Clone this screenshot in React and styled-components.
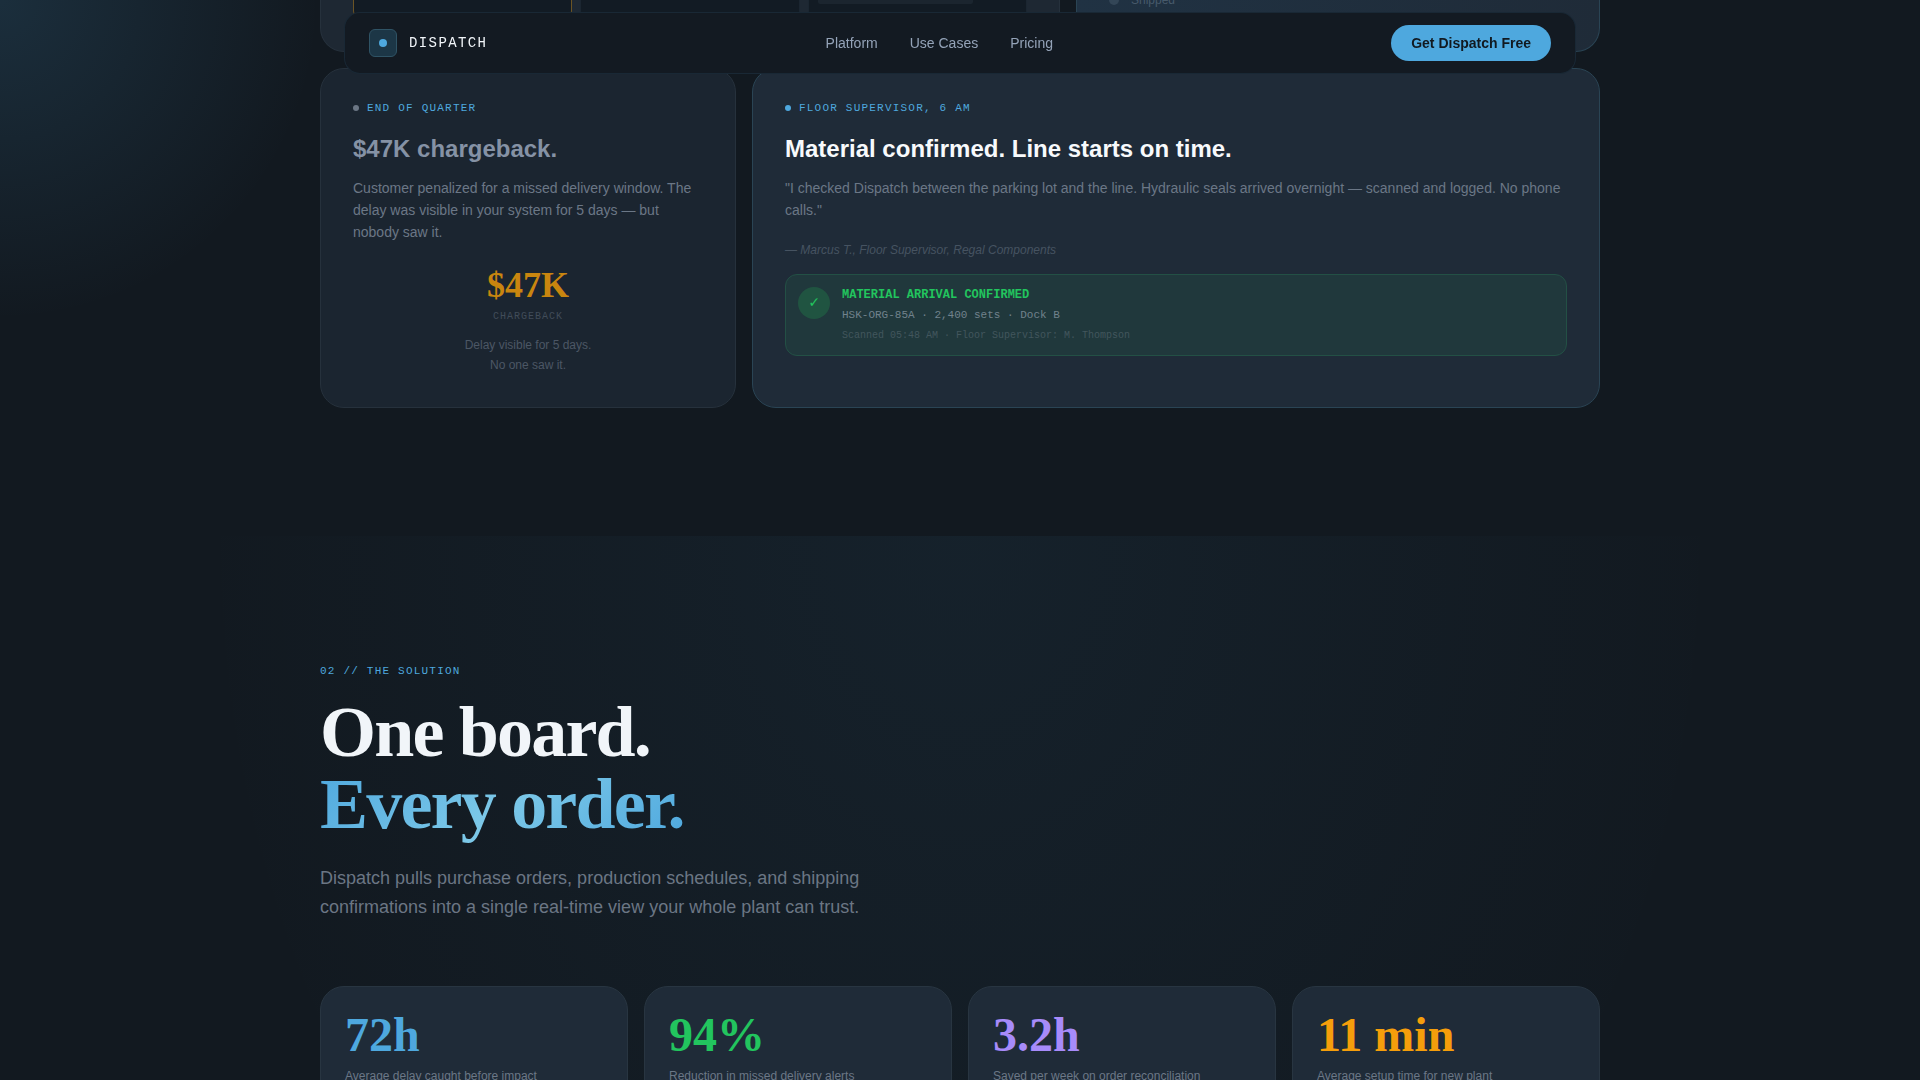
import React from "react";
import styled, { createGlobalStyle } from "styled-components";

const sans = `"Liberation Sans", Arial, sans-serif`;
const serif = `"Liberation Serif", "Times New Roman", serif`;
const mono = `"Liberation Mono", "Courier New", monospace`;

const GlobalStyle = createGlobalStyle`
  *, *::before, *::after { box-sizing: border-box; }
  html { background: #121920; }
  body {
    margin: 0;
    font-family: ${sans};
    color: #f1f5f9;
    background: radial-gradient(circle 320px at 0 0, rgba(78, 168, 222, 0.15), transparent) no-repeat fixed #121920;
  }
  h2, h3, p { margin: 0; }
`;

const Header = styled.header`
  position: fixed;
  z-index: 10;
  top: 12px;
  left: 0;
  right: 0;
  max-width: 1280px;
  margin: 0 auto;
  padding: 0 24px;
`;

const NavBar = styled.nav`
  display: flex;
  align-items: center;
  justify-content: space-between;
  padding: 12px 24px;
  border: 1px solid rgba(78, 168, 222, 0.1);
  border-radius: 16px;
  background: #131a22;
`;

const Brand = styled.a`
  display: flex;
  align-items: center;
  gap: 12px;
  color: #f1f5f9;
  font: 14px/16px ${mono};
  letter-spacing: 0.1em;
  text-decoration: none;
`;

const BrandMark = styled.span`
  display: grid;
  place-items: center;
  width: 28px;
  height: 28px;
  border: 1px solid #2f5365;
  border-radius: 6px;
  background: #1c3646;

  &::after {
    content: "";
    width: 8px;
    height: 8px;
    border-radius: 50%;
    background: #4ea8de;
  }
`;

const NavLinks = styled.div`
  display: flex;
  gap: 32px;
`;

const NavLink = styled.a`
  color: #94a3b8;
  font-size: 14px;
  line-height: 16px;
  text-decoration: none;
`;

const CtaButton = styled.button`
  padding: 10px 20px;
  border: 0;
  border-radius: 18px;
  background: #4ea8de;
  color: #111920;
  font: 600 14px/16px ${sans};
  cursor: pointer;
`;

const Container = styled.div`
  max-width: 1280px;
  margin: 0 auto;
`;

const StorySection = styled.section`
  padding-bottom: 128px;
`;

const StoryGrid = styled(Container)`
  display: grid;
  grid-template-columns: repeat(12, 1fr);
  gap: 16px;
`;

const Card = styled.article`
  grid-column: span ${(p) => p.$span};
  padding: 32px;
  border: 1px solid ${(p) => (p.$active ? "#2a4454" : "#26313c")};
  border-radius: 24px;
  background: ${(p) => (p.$active ? "#1f2b38" : "#1b2530")};
`;

const TailCard = styled(Card)`
  padding-top: 0;
  border-top: 0;
  border-radius: 0 0 24px 24px;
  background: ${(p) => (p.$active ? "linear-gradient(90deg, #203243, #1f2b38)" : "#1e2833")};
`;

const Columns = styled.div`
  display: grid;
  grid-template-columns: repeat(3, 1fr);
  gap: 8px;
`;

const Column = styled.div`
  height: 19px;
  padding: 0 9px;
  border: 1px solid ${(p) => (p.$alert ? "#6b5424" : "#1b2631")};
  border-top: 0;
  border-radius: 0 0 8px 8px;
  background: #121b24;
`;

const ColumnBar = styled.div`
  width: 155px;
  height: 4px;
  border-radius: 0 0 2px 2px;
  background: #1b252f;
`;

const StatusRow = styled.div`
  display: flex;
  align-items: flex-end;
  height: 9px;
  overflow: hidden;
`;

const Status = styled.span`
  display: flex;
  align-items: center;
  gap: 12px;
  color: #475a6b;
  font-size: 12px;
  line-height: 18px;

  &::before {
    content: "";
    width: 10px;
    height: 10px;
    border-radius: 50%;
    background: #334657;
  }
`;

const Eyebrow = styled.p`
  display: flex;
  align-items: center;
  gap: 8px;
  margin-bottom: 18px;
  color: #4ea8de;
  font: 11px/14px ${mono};
  letter-spacing: 0.11em;
  text-transform: uppercase;
`;

const Dot = styled.span`
  width: 6px;
  height: 6px;
  border-radius: 50%;
  background: ${(p) => (p.$active ? "#4ea8de" : "#6b7684")};
`;

const CardTitle = styled.h3`
  margin-bottom: 12px;
  color: ${(p) => (p.$active ? "#f8fafc" : "#8592a5")};
  font-size: 24px;
  font-weight: 700;
  line-height: 32px;
`;

const CardText = styled.p`
  color: #6b7786;
  font-size: 14px;
  line-height: 22px;
`;

const Loss = styled.div`
  margin-top: 24px;
  text-align: center;
`;

const LossValue = styled.p`
  margin-bottom: 5px;
  color: #c9860f;
  font: 700 36px/36px ${serif};
`;

const LossCaption = styled.p`
  margin-bottom: 9px;
  color: #414c59;
  font: 10px/18px ${mono};
  letter-spacing: 0.1em;
`;

const LossNote = styled.p`
  color: #4c5765;
  font-size: 12px;
  line-height: 20px;
`;

const Attribution = styled.p`
  margin: 20px 0 15px;
  color: #465361;
  font-size: 12px;
  font-style: italic;
  line-height: 18px;
`;

const Notice = styled.div`
  display: flex;
  gap: 12px;
  padding: 12px;
  border: 1px solid #235045;
  border-radius: 12px;
  background: #20383c;
  font-family: ${mono};
`;

const NoticeIcon = styled.span`
  display: grid;
  place-items: center;
  width: 32px;
  height: 32px;
  border-radius: 50%;
  background: #205441;
  color: #22c55e;
  font-size: 16px;
  line-height: 18px;
`;

const NoticeTitle = styled.p`
  margin-bottom: 3px;
  color: #22c55e;
  font-size: 12px;
  font-weight: 700;
  line-height: 16px;
`;

const NoticeText = styled.p`
  margin-bottom: 5px;
  color: #71828c;
  font-size: 11px;
  line-height: 18px;
`;

const NoticeMeta = styled.p`
  color: #42565c;
  font-size: 10px;
  line-height: 14px;
`;

const SolutionSection = styled.section`
  padding: 128px 0;
  background: radial-gradient(ellipse 40% 1000px at 50% 0, rgba(78, 168, 222, 0.06), transparent);
`;

const Headline = styled.h2`
  color: #f1f5f9;
  font: 700 72px/72px ${serif};
  letter-spacing: -0.025em;
`;

const Accent = styled.span`
  background: linear-gradient(135deg, #4ea8de 0%, #7cc8e8 50%, #4ea8de 100%);
  background-clip: text;
  -webkit-background-clip: text;
  color: transparent;
`;

const Lead = styled.p`
  max-width: 560px;
  margin: 24px 0 64px;
  color: #6b7684;
  font-size: 18px;
  line-height: 29px;
`;

const StatGrid = styled.div`
  display: grid;
  grid-template-columns: repeat(4, 1fr);
  gap: 16px;
`;

const StatCard = styled.div`
  padding: 24px;
  border: 1px solid #283541;
  border-radius: 24px;
  background: #1f2b38;
`;

const StatValue = styled.p`
  margin-bottom: 8px;
  color: ${(p) => p.$color};
  font: 700 48px/48px ${serif};
`;

const StatLabel = styled.p`
  color: #6b7786;
  font-size: 12px;
  line-height: 18px;
`;

const links = ["Platform", "Use Cases", "Pricing"];

const stats = [
  { value: "72h", label: "Average delay caught before impact", color: "#4ea8de" },
  { value: "94%", label: "Reduction in missed delivery alerts", color: "#22c55e" },
  { value: "3.2h", label: "Saved per week on order reconciliation", color: "#a78bfa" },
  { value: "11 min", label: "Average setup time for new plant", color: "#f59e0b" },
];

export default function App() {
  return (
    <>
      <GlobalStyle />
      <Header>
        <NavBar>
          <Brand href="#">
            <BrandMark />
            DISPATCH
          </Brand>
          <NavLinks>
            {links.map((label) => (
              <NavLink href="#" key={label}>{label}</NavLink>
            ))}
          </NavLinks>
          <CtaButton type="button">Get Dispatch Free</CtaButton>
        </NavBar>
      </Header>
      <main>
        <StorySection>
          <StoryGrid>
            <TailCard $span={7}>
              <Columns>
                <Column $alert />
                <Column />
                <Column>
                  <ColumnBar />
                </Column>
              </Columns>
            </TailCard>
            <TailCard $span={5} $active>
              <StatusRow>
                <Status>Shipped</Status>
              </StatusRow>
            </TailCard>
            <Card $span={4}>
              <Eyebrow><Dot />End of quarter</Eyebrow>
              <CardTitle>$47K chargeback.</CardTitle>
              <CardText>
                Customer penalized for a missed delivery window. The delay was visible in your
                system for 5 days — but nobody saw it.
              </CardText>
              <Loss>
                <LossValue>$47K</LossValue>
                <LossCaption>CHARGEBACK</LossCaption>
                <LossNote>
                  Delay visible for 5 days.
                  <br />
                  No one saw it.
                </LossNote>
              </Loss>
            </Card>
            <Card $span={8} $active>
              <Eyebrow><Dot $active />Floor supervisor, 6 AM</Eyebrow>
              <CardTitle $active>Material confirmed. Line starts on time.</CardTitle>
              <CardText>
                "I checked Dispatch between the parking lot and the line. Hydraulic seals arrived
                overnight — scanned and logged. No phone calls."
              </CardText>
              <Attribution>— Marcus T., Floor Supervisor, Regal Components</Attribution>
              <Notice>
                <NoticeIcon>✓</NoticeIcon>
                <div>
                  <NoticeTitle>MATERIAL ARRIVAL CONFIRMED</NoticeTitle>
                  <NoticeText>HSK-ORG-85A · 2,400 sets · Dock B</NoticeText>
                  <NoticeMeta>Scanned 05:48 AM · Floor Supervisor: M. Thompson</NoticeMeta>
                </div>
              </Notice>
            </Card>
          </StoryGrid>
        </StorySection>
        <SolutionSection>
          <Container>
            <Eyebrow>02 // The solution</Eyebrow>
            <Headline>
              One board.
              <br />
              <Accent>Every order.</Accent>
            </Headline>
            <Lead>
              Dispatch pulls purchase orders, production schedules, and shipping confirmations
              into a single real-time view your whole plant can trust.
            </Lead>
            <StatGrid>
              {stats.map((stat) => (
                <StatCard key={stat.value}>
                  <StatValue $color={stat.color}>{stat.value}</StatValue>
                  <StatLabel>{stat.label}</StatLabel>
                </StatCard>
              ))}
            </StatGrid>
          </Container>
        </SolutionSection>
      </main>
    </>
  );
}
